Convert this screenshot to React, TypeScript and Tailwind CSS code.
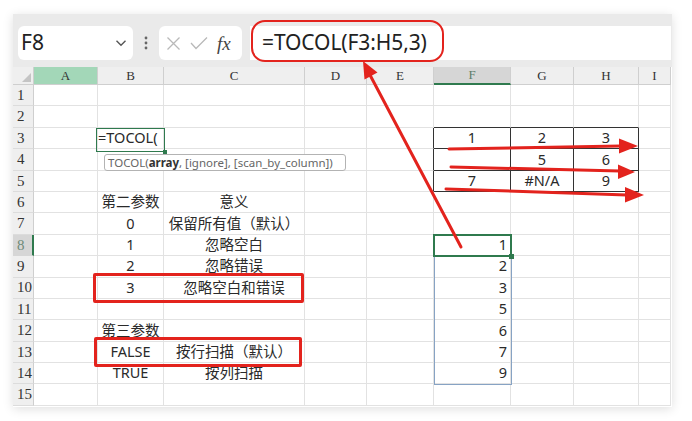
import React from 'react';

const COLS = ['A', 'B', 'C', 'D', 'E', 'F', 'G', 'H', 'I'];

type Cell = { text: string; align?: 'left' | 'center' | 'right' };

const data: Record<number, Record<string, Cell>> = {
  3: { B: { text: '=TOCOL(', align: 'left' }, F: { text: '1' }, G: { text: '2' }, H: { text: '3' } },
  4: { G: { text: '5' }, H: { text: '6' } },
  5: { F: { text: '7' }, G: { text: '#N/A' }, H: { text: '9' } },
  6: { B: { text: '第二参数' }, C: { text: '意义' } },
  7: { B: { text: '0' }, C: { text: '保留所有值（默认）' } },
  8: { B: { text: '1' }, C: { text: '忽略空白' }, F: { text: '1', align: 'right' } },
  9: { B: { text: '2' }, C: { text: '忽略错误' }, F: { text: '2', align: 'right' } },
  10: { B: { text: '3' }, C: { text: '忽略空白和错误' }, F: { text: '3', align: 'right' } },
  11: { F: { text: '5', align: 'right' } },
  12: { B: { text: '第三参数' }, F: { text: '6', align: 'right' } },
  13: { B: { text: 'FALSE' }, C: { text: '按行扫描（默认）' }, F: { text: '7', align: 'right' } },
  14: { B: { text: 'TRUE' }, C: { text: '按列扫描' }, F: { text: '9', align: 'right' } },
};

// outer border of the F3:H5 block
const blackRight = (r: number, c: number) => r >= 3 && r <= 5 && c >= 4 && c <= 7;
const blackBottom = (r: number, c: number) => r >= 2 && r <= 5 && c >= 5 && c <= 7;

function Toolbar() {
  return (
    <div className="h-[53px] bg-[#eaeaea] flex items-start pt-[12px] pl-[5px] pr-[1px]">
      <div className="w-[115px] h-[34px] bg-white rounded-[6px] flex items-center pl-[3px] pr-[6px]">
        <span className="text-[21px] text-[#222] flex-1">F8</span>
        <svg width="12" height="8" viewBox="0 0 12 8">
          <path d="M1.5 1.8 L6 6.2 L10.5 1.8" fill="none" stroke="#555" strokeWidth="1.4" />
        </svg>
      </div>
      <div className="w-[26px] h-[34px] flex items-center justify-center">
        <svg width="4" height="14" viewBox="0 0 4 14">
          <circle cx="2" cy="2" r="1.4" fill="#666" />
          <circle cx="2" cy="7" r="1.4" fill="#666" />
          <circle cx="2" cy="12" r="1.4" fill="#666" />
        </svg>
      </div>
      <div className="w-[83px] h-[34px] bg-white rounded-[6px] flex items-center pl-[7px] gap-[9px]">
        <svg width="15" height="15" viewBox="0 0 15 15">
          <path d="M1.5 1.5 L13.5 13.5 M13.5 1.5 L1.5 13.5" stroke="#b9b9b9" strokeWidth="1.3" />
        </svg>
        <svg width="18" height="14" viewBox="0 0 18 14">
          <path d="M1 7 L6 12.5 L17 1.5" fill="none" stroke="#b9b9b9" strokeWidth="1.3" />
        </svg>
        <span className="font-['Liberation_Serif',serif] italic text-[19px] text-[#444] leading-none">fx</span>
      </div>
      <div className="ml-[8px] flex-1 h-[34px] bg-white flex items-center pl-[12px]">
        <span className="text-[21px] text-[#222] tracking-[-0.1px]">=TOCOL(F3:H5,3)</span>
      </div>
    </div>
  );
}

function HeaderRow() {
  return (
    <>
      <div className="bg-[#efefef] border-r border-b border-[#cfcfcf] flex items-end justify-end p-[2px]">
        <div className="w-0 h-0 border-l-[9px] border-l-transparent border-b-[9px] border-b-[#c4c4c4]" />
      </div>
      {COLS.map((c) => {
        if (c === 'A')
          return (
            <div key={c} className="bg-[#a3d7b8] border-r border-b border-[#cfcfcf] flex items-center justify-center text-[#333]">
              {c}
            </div>
          );
        if (c === 'F')
          return (
            <div key={c} className="bg-[#d6d6d6] border-r border-[#cfcfcf] border-b-2 border-b-[#2f7a4e] flex items-center justify-center text-[#5d7d69]">
              {c}
            </div>
          );
        return (
          <div key={c} className="bg-[#efefef] border-r border-b border-[#cfcfcf] flex items-center justify-center text-[#333] overflow-hidden">
            {c}
          </div>
        );
      })}
    </>
  );
}

function Row({ r }: { r: number }) {
  const row = data[r] || {};
  return (
    <>
      {r === 8 ? (
        <div className="bg-[#d6d6d6] border-r-2 border-r-[#2f7a4e] border-b border-b-[#d6d6d6] flex items-center pl-[4px] text-[15px] text-[#6e8a78]">
          {r}
        </div>
      ) : (
        <div className="bg-[#efefef] border-r border-r-[#cfcfcf] border-b border-b-[#dcdcdc] flex items-center pl-[4px] text-[15px] text-[#333]">
          {r}
        </div>
      )}
      {COLS.map((c, i) => {
        const cell = row[c];
        const rb = blackRight(r, i);
        const bb = blackBottom(r, i);
        const align =
          cell?.align === 'left' ? 'justify-start' : cell?.align === 'right' ? 'justify-end pr-[3px]' : 'justify-center';
        return (
          <div
            key={c}
            className={`border-r border-b flex items-center whitespace-nowrap font-['Noto_Sans','Noto_Sans_CJK_SC',sans-serif] text-[14.5px] text-[#2a2a2a] ${align} ${
              rb ? 'border-r-[#333]' : 'border-r-[#e2e2e2]'
            } ${bb ? 'border-b-[#333]' : 'border-b-[#e2e2e2]'}`}
          >
            {cell?.text}
          </div>
        );
      })}
    </>
  );
}

export default function App() {
  const rows = Array.from({ length: 15 }, (_, i) => i + 1);
  return (
    <div className="w-[692px] h-[421px] bg-white pt-[14px] pl-[13px] font-['Noto_Sans','Noto_Sans_CJK_SC',sans-serif]">
      <div className="relative w-[659px] h-[393px] overflow-hidden bg-white shadow-[0_2px_10px_rgba(0,0,0,0.13)]">
        <Toolbar />
        <div className="grid grid-cols-[21px_64px_66px_141px_62px_67px_77px_63px_65px_32px] grid-rows-[18px_repeat(15,21.4px)] font-['Liberation_Serif',serif] text-[13px]">
          <HeaderRow />
          {rows.map((r) => (
            <Row key={r} r={r} />
          ))}
        </div>

        {/* cell in edit mode + function hint */}
        <div className="absolute left-[83px] top-[114px] w-[69px] h-[24px] border-[1.5px] border-[#2f7a4e]">
          <div className="absolute -right-[3px] -bottom-[3px] w-[4px] h-[4px] bg-[#2f7a4e]" />
        </div>
        <div className="absolute left-[91px] top-[140px] w-[242px] h-[17px] bg-white border border-[#b3b3b3] rounded-[3px] flex items-center pl-[3px] text-[11.5px] text-[#666] whitespace-nowrap">
          TOCOL(<b className="text-[#333]">array</b>, [ignore], [scan_by_column])
        </div>

        {/* result range */}
        <div className="absolute left-[421px] top-[220px] w-[78px] h-[151px] border border-[#87a3c4]" />
        <div className="absolute left-[420px] top-[220px] w-[79px] h-[23px] border-2 border-[#2f7a4e]">
          <div className="absolute -right-[4px] -bottom-[4px] w-[5px] h-[5px] bg-[#2f7a4e]" />
        </div>

        {/* annotations */}
        <div className="absolute left-[238px] top-[6px] w-[193px] h-[42px] border-[2.5px] border-[#e3231d] rounded-[14px]" />
        <div className="absolute left-[80px] top-[259px] w-[211px] h-[30px] border-[3px] border-[#e3231d] rounded-[2px]" />
        <div className="absolute left-[81px] top-[323px] w-[208px] h-[30px] border-[3px] border-[#e3231d] rounded-[2px]" />

        <svg className="absolute left-0 top-0" width="659" height="393" viewBox="13 14 659 393">
          <g stroke="#e3231d" strokeWidth="3" strokeLinecap="round" fill="none">
            <path d="M461 247 L370 75" />
            <path d="M449 149 L621 146" />
            <path d="M451 167 L620 171" />
            <path d="M446 189 L627 195" />
          </g>
          <g fill="#e3231d">
            <path d="M363 61 L377.5 72.5 L364.5 79.5 Z" />
            <path d="M638 146 L619 138.5 L619 153.5 Z" />
            <path d="M635 172 L618 164.5 L618 179 Z" />
            <path d="M644 195 L625 187 L625 202.5 Z" />
          </g>
        </svg>
      </div>
    </div>
  );
}
